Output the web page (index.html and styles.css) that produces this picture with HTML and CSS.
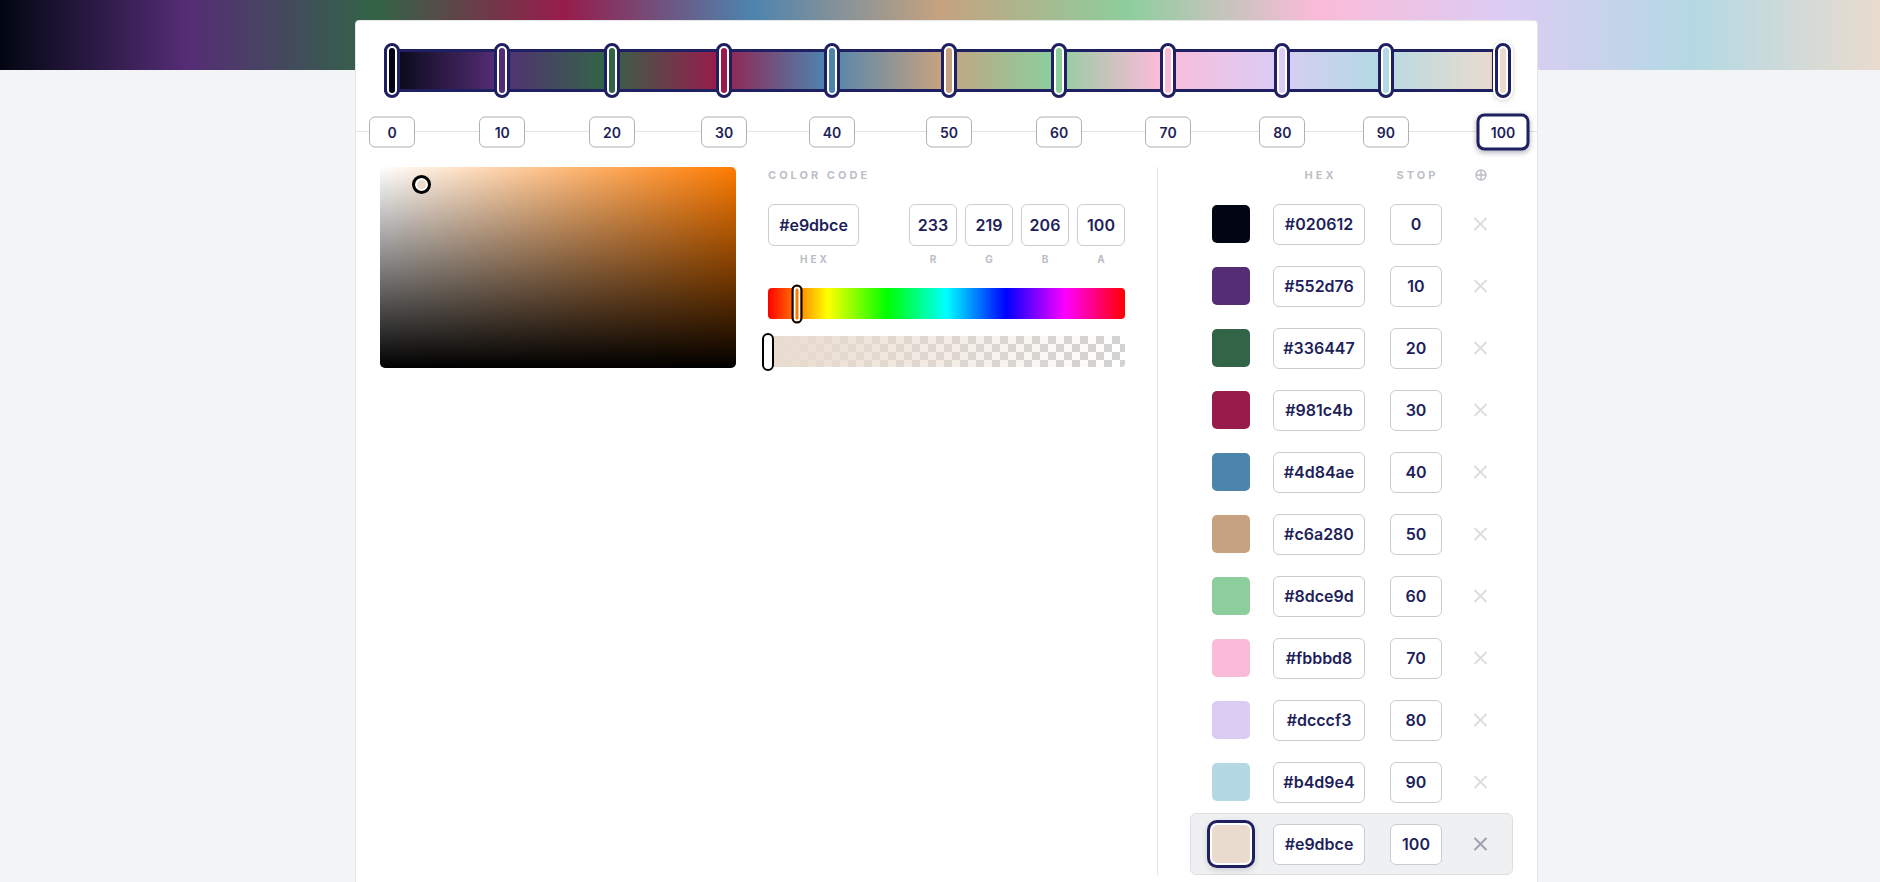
FILE: index.html
```html
<!DOCTYPE html>
<html lang="en">
<head>
<meta charset="utf-8">
<title>Gradient editor</title>
<link rel="stylesheet" href="styles.css">
</head>
<body>
<div class="band"></div>
<main class="card">
  <section class="track">
    <div class="bar"></div>
    <div class="handle" style="--p:0;--c:#020612"><span></span></div>
    <div class="handle" style="--p:.0992;--c:#552d76"><span></span></div>
    <div class="handle" style="--p:.1981;--c:#336447"><span></span></div>
    <div class="handle" style="--p:.299;--c:#981c4b"><span></span></div>
    <div class="handle" style="--p:.3961;--c:#4d84ae"><span></span></div>
    <div class="handle" style="--p:.5014;--c:#c6a280"><span></span></div>
    <div class="handle" style="--p:.6005;--c:#8dce9d"><span></span></div>
    <div class="handle" style="--p:.6986;--c:#fbbbd8"><span></span></div>
    <div class="handle" style="--p:.8015;--c:#dcccf3"><span></span></div>
    <div class="handle" style="--p:.8945;--c:#b4d9e4"><span></span></div>
    <div class="handle active" style="--p:1;--c:#e9dbce"><span></span></div>
  </section>
  <section class="labels">
    <div class="axis">
      <span class="lbl" style="--p:0">0</span>
      <span class="lbl" style="--p:.0992">10</span>
      <span class="lbl" style="--p:.1981">20</span>
      <span class="lbl" style="--p:.299">30</span>
      <span class="lbl" style="--p:.3961">40</span>
      <span class="lbl" style="--p:.5014">50</span>
      <span class="lbl" style="--p:.6005">60</span>
      <span class="lbl" style="--p:.6986">70</span>
      <span class="lbl" style="--p:.8015">80</span>
      <span class="lbl" style="--p:.8945">90</span>
      <span class="lbl active" style="--p:1">100</span>
    </div>
  </section>
  <section class="editor">
    <div class="sv">
      <div class="sv-thumb" style="left:41px;top:17px"></div>
    </div>
    <div class="code">
      <div class="eyebrow">COLOR CODE</div>
      <div class="fields">
        <div class="field">
          <div class="box hex">#e9dbce</div>
          <div class="field-label">HEX</div>
        </div>
        <div class="rgba">
          <div class="field"><div class="box num">233</div><div class="field-label">R</div></div>
          <div class="field"><div class="box num">219</div><div class="field-label">G</div></div>
          <div class="field"><div class="box num">206</div><div class="field-label">B</div></div>
          <div class="field"><div class="box num">100</div><div class="field-label">A</div></div>
        </div>
      </div>
      <div class="hue"><div class="hue-thumb" style="left:8.06%"></div></div>
      <div class="alpha"><div class="alpha-thumb" style="left:0%"></div></div>
    </div>
    <div class="divider"></div>
    <div class="list">
      <div class="list-head">
        <span class="c-sw"></span>
        <span class="c-hex">HEX</span>
        <span class="c-stop">STOP</span>
        <span class="c-x"><svg width="12" height="12" viewBox="0 0 12 12"><circle cx="6" cy="6" r="5" fill="none" stroke="currentColor" stroke-width="1.4"/><path d="M6 1v10M1 6h10" stroke="currentColor" stroke-width="1.4"/></svg></span>
      </div>
      <div class="rows">
        <div class="row"><span class="sw" style="--c:#020612"></span><span class="box c-hex">#020612</span><span class="box c-stop">0</span><span class="c-x x"><svg width="15" height="14" viewBox="0 0 15 14"><path d="M1.5 1 13.5 13M13.5 1 1.5 13" stroke="currentColor" stroke-width="2"/></svg></span></div>
        <div class="row"><span class="sw" style="--c:#552d76"></span><span class="box c-hex">#552d76</span><span class="box c-stop">10</span><span class="c-x x"><svg width="15" height="14" viewBox="0 0 15 14"><path d="M1.5 1 13.5 13M13.5 1 1.5 13" stroke="currentColor" stroke-width="2"/></svg></span></div>
        <div class="row"><span class="sw" style="--c:#336447"></span><span class="box c-hex">#336447</span><span class="box c-stop">20</span><span class="c-x x"><svg width="15" height="14" viewBox="0 0 15 14"><path d="M1.5 1 13.5 13M13.5 1 1.5 13" stroke="currentColor" stroke-width="2"/></svg></span></div>
        <div class="row"><span class="sw" style="--c:#981c4b"></span><span class="box c-hex">#981c4b</span><span class="box c-stop">30</span><span class="c-x x"><svg width="15" height="14" viewBox="0 0 15 14"><path d="M1.5 1 13.5 13M13.5 1 1.5 13" stroke="currentColor" stroke-width="2"/></svg></span></div>
        <div class="row"><span class="sw" style="--c:#4d84ae"></span><span class="box c-hex">#4d84ae</span><span class="box c-stop">40</span><span class="c-x x"><svg width="15" height="14" viewBox="0 0 15 14"><path d="M1.5 1 13.5 13M13.5 1 1.5 13" stroke="currentColor" stroke-width="2"/></svg></span></div>
        <div class="row"><span class="sw" style="--c:#c6a280"></span><span class="box c-hex">#c6a280</span><span class="box c-stop">50</span><span class="c-x x"><svg width="15" height="14" viewBox="0 0 15 14"><path d="M1.5 1 13.5 13M13.5 1 1.5 13" stroke="currentColor" stroke-width="2"/></svg></span></div>
        <div class="row"><span class="sw" style="--c:#8dce9d"></span><span class="box c-hex">#8dce9d</span><span class="box c-stop">60</span><span class="c-x x"><svg width="15" height="14" viewBox="0 0 15 14"><path d="M1.5 1 13.5 13M13.5 1 1.5 13" stroke="currentColor" stroke-width="2"/></svg></span></div>
        <div class="row"><span class="sw" style="--c:#fbbbd8"></span><span class="box c-hex">#fbbbd8</span><span class="box c-stop">70</span><span class="c-x x"><svg width="15" height="14" viewBox="0 0 15 14"><path d="M1.5 1 13.5 13M13.5 1 1.5 13" stroke="currentColor" stroke-width="2"/></svg></span></div>
        <div class="row"><span class="sw" style="--c:#dcccf3"></span><span class="box c-hex">#dcccf3</span><span class="box c-stop">80</span><span class="c-x x"><svg width="15" height="14" viewBox="0 0 15 14"><path d="M1.5 1 13.5 13M13.5 1 1.5 13" stroke="currentColor" stroke-width="2"/></svg></span></div>
        <div class="row"><span class="sw" style="--c:#b4d9e4"></span><span class="box c-hex">#b4d9e4</span><span class="box c-stop">90</span><span class="c-x x"><svg width="15" height="14" viewBox="0 0 15 14"><path d="M1.5 1 13.5 13M13.5 1 1.5 13" stroke="currentColor" stroke-width="2"/></svg></span></div>
        <div class="row sel"><span class="sw" style="--c:#e9dbce"></span><span class="box c-hex">#e9dbce</span><span class="box c-stop">100</span><span class="c-x x"><svg width="15" height="14" viewBox="0 0 15 14"><path d="M1.5 1 13.5 13M13.5 1 1.5 13" stroke="currentColor" stroke-width="2"/></svg></span></div>
      </div>
    </div>
  </section>
</main>
</body>
</html>
```
FILE: styles.css
```css
* { box-sizing: border-box; }

body {
  margin: 0;
  background: #f3f4f6;
  font-family: Inter, "Liberation Sans", sans-serif;
  color: #1e1f5a;
}

.band {
  height: 70px;
  background: linear-gradient(to right, #020612 0%, #552d76 10%, #336447 20%, #981c4b 30%, #4d84ae 40%, #c6a280 50%, #8dce9d 60%, #fbbbd8 70%, #dcccf3 80%, #b4d9e4 90%, #e9dbce 100%);
}

.card {
  width: 1183px;
  margin: -50px 0 0 calc(50% - 585px);
  background: #fff;
  border: 1px solid #e3e5e9;
  border-radius: 4px;
  padding: 22px 0 12px;
}

/* gradient track */
.track {
  position: relative;
  height: 55px;
  margin: 0 26px 0 28px;
  padding-top: 6px;
}

.bar {
  height: 43px;
  margin-right: 16px;
  border: 3px solid #1f2061;
  background: linear-gradient(to right, #020612 0%, #552d76 9.92%, #336447 19.81%, #981c4b 29.9%, #4d84ae 39.61%, #c6a280 50.14%, #8dce9d 60.05%, #fbbbd8 69.86%, #dcccf3 80.15%, #b4d9e4 89.45%, #e9dbce 100%);
}

.handle {
  position: absolute;
  top: 0;
  left: calc(var(--p) * (100% - 16px));
  width: 16px;
  height: 55px;
  border: 3px solid #1f2061;
  border-radius: 8px;
  background: #fff;
  padding: 2px;
}

.handle span {
  display: block;
  height: 100%;
  border-radius: 3px;
  background: var(--c);
}

.handle.active {
  box-shadow: 0 0 0 2px #fff, 0 1px 5px 2px rgba(0, 0, 0, 0.18);
}

/* stop labels */
.labels {
  height: 37px;
  margin-top: 15px;
  background: linear-gradient(#e2e3e6, #e2e3e6) 0 18px / 100% 1px no-repeat;
}

.axis {
  position: relative;
  height: 100%;
  margin: 0 26px 0 28px;
}

.lbl {
  position: absolute;
  top: 50%;
  left: calc(var(--p) * (100% - 16px) + 8px);
  transform: translate(-50%, -50%);
  width: 46px;
  height: 31px;
  border: 1px solid #aeb0b5;
  border-radius: 6px;
  background: #fff;
  display: flex;
  align-items: center;
  justify-content: center;
  font-size: 14px;
  font-weight: 600;
}

.lbl.active {
  width: 53px;
  height: 37px;
  border: 3px solid #1f2061;
  border-radius: 8px;
  box-shadow: 0 2px 5px rgba(20, 20, 60, 0.3);
}

/* editor */
.editor {
  display: flex;
  margin-top: 17px;
  padding: 0 24px;
}

.sv {
  position: relative;
  flex: none;
  width: 356px;
  height: 201px;
  border-radius: 5px;
  background:
    linear-gradient(to top, #000, rgba(0, 0, 0, 0)),
    linear-gradient(to right, #fff, #ff7b00);
}

.sv-thumb {
  position: absolute;
  width: 19px;
  height: 19px;
  margin: -9px 0 0 -9px;
  border: 3px solid #000;
  border-radius: 50%;
  background: #e9dbce;
  box-shadow: inset 0 0 0 2px #fff;
}

.code {
  flex: none;
  width: 357px;
  margin-left: 32px;
}

.eyebrow {
  font-size: 11px;
  font-weight: 700;
  letter-spacing: 3px;
  line-height: 16px;
  color: #bdc0c8;
}

.fields {
  display: flex;
  justify-content: space-between;
  margin-top: 21px;
}

.rgba {
  display: flex;
  gap: 8px;
}

.field {
  display: flex;
  flex-direction: column;
  align-items: center;
}

.box {
  display: flex;
  align-items: center;
  justify-content: center;
  height: 42px;
  border: 1px solid #c9ccd3;
  border-radius: 6px;
  background: #fff;
  font-size: 16px;
  font-weight: 600;
  color: #1e1f5a;
}

.box.hex { width: 91px; }
.box.num { width: 48px; }

.field-label {
  margin-top: 6px;
  padding-left: 3px;
  font-size: 10px;
  font-weight: 700;
  letter-spacing: 3px;
  line-height: 14px;
  color: #b9bdc5;
}

.hue {
  position: relative;
  height: 31px;
  margin-top: 22px;
  border-radius: 4px;
  background: linear-gradient(to right, #f00 0%, #ff0 16.67%, #0f0 33.33%, #0ff 50%, #00f 66.67%, #f0f 83.33%, #f00 100%);
}

.hue-thumb {
  position: absolute;
  top: 50%;
  width: 11px;
  height: 39px;
  transform: translate(-50%, -50%);
  border: 2.5px solid #000;
  border-radius: 6px;
  background: #ff7b00;
  box-shadow: inset 0 0 0 2px #fff;
}

.alpha {
  position: relative;
  height: 31px;
  margin-top: 17px;
  border-radius: 4px;
  background:
    linear-gradient(to right, #e9dbce, rgba(233, 219, 206, 0)),
    conic-gradient(#d2d2d2 25%, #fff 0 50%, #d2d2d2 0 75%, #fff 0) 0 0 / 16px 16px;
}

.alpha-thumb {
  position: absolute;
  top: 50%;
  width: 12px;
  height: 38px;
  transform: translate(-50%, -50%);
  border: 2.5px solid #000;
  border-radius: 6px;
  background: #fff;
}

.divider {
  flex: none;
  width: 1px;
  margin-left: 32px;
  background: #e5e7eb;
}

.list {
  flex: none;
  width: 323px;
  margin-left: 32px;
}

.list-head {
  display: flex;
  align-items: center;
  height: 16px;
  padding-left: 22px;
  font-size: 11px;
  font-weight: 700;
  letter-spacing: 3px;
  color: #bdc0c8;
}

.list-head span {
  display: flex;
  justify-content: center;
  padding-left: 3px;
}

.c-sw { width: 38px; flex: none; }
.c-hex { width: 92px; flex: none; margin-left: 23px; }
.c-stop { width: 52px; flex: none; margin-left: 25px; }
.c-x { width: 15px; flex: none; margin-left: 31px; display: flex; justify-content: center; }

.list-head .c-x { padding-left: 0; color: #b9bcc4; }

.rows {
  margin-top: 10px;
}

.row {
  display: flex;
  align-items: center;
  height: 62px;
  padding-left: 21px;
  border: 1px solid transparent;
  border-radius: 6px;
}

.row .box { height: 41px; }

.sw {
  flex: none;
  width: 38px;
  height: 38px;
  border-radius: 5px;
  background: var(--c);
}

.x { color: #dcdde1; }

.row.sel {
  background: #eff0f2;
  border-color: #dcdee2;
}

.row.sel .sw {
  box-shadow: 0 0 0 2px #fff, 0 0 0 5px #1f2061, 0 2px 6px 5px rgba(0, 0, 0, 0.15);
}

.row.sel .x { color: #9ea2aa; }
```
